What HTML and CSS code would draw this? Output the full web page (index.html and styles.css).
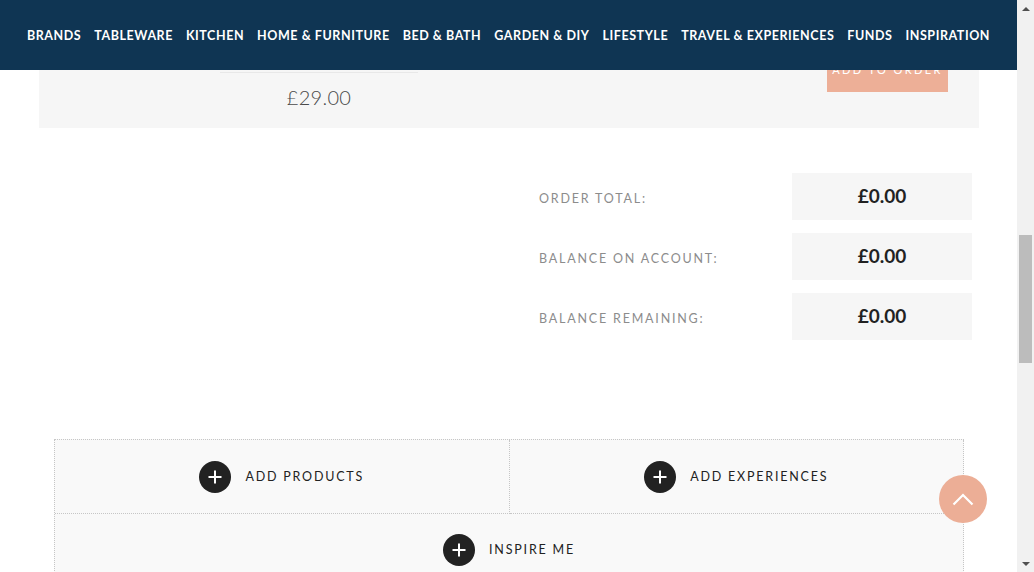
FILE: index.html
```html
<!DOCTYPE html>
<html lang="en">
<head>
<meta charset="utf-8">
<title>Order</title>
<link rel="stylesheet" href="styles.css">
</head>
<body>
<div class="window">
  <div class="viewport">
    <header class="topnav">
      <nav class="menu">
        <a class="menu-item">BRANDS</a>
        <a class="menu-item">TABLEWARE</a>
        <a class="menu-item">KITCHEN</a>
        <a class="menu-item">HOME &amp; FURNITURE</a>
        <a class="menu-item">BED &amp; BATH</a>
        <a class="menu-item">GARDEN &amp; DIY</a>
        <a class="menu-item">LIFESTYLE</a>
        <a class="menu-item">TRAVEL &amp; EXPERIENCES</a>
        <a class="menu-item">FUNDS</a>
        <a class="menu-item">INSPIRATION</a>
      </nav>
    </header>

    <main class="page">
      <section class="product">
        <div class="product-info">
          <div class="divider"></div>
          <div class="price">£29.00</div>
        </div>
        <div class="product-action">
          <button class="add-btn">ADD TO ORDER</button>
        </div>
      </section>

      <section class="totals">
        <div class="totals-list">
          <div class="total-row"><span class="total-label">ORDER TOTAL:</span><span class="total-value">£0.00</span></div>
          <div class="total-row"><span class="total-label">BALANCE ON ACCOUNT:</span><span class="total-value">£0.00</span></div>
          <div class="total-row"><span class="total-label">BALANCE REMAINING:</span><span class="total-value">£0.00</span></div>
        </div>
      </section>

      <section class="adders">
        <a class="adder">
          <span class="plus"><svg viewBox="0 0 32 32" width="32" height="32"><path d="M16 9.5v13M9.5 16h13" stroke="#fff" stroke-width="2" fill="none"/></svg></span>
          <span class="adder-text">ADD PRODUCTS</span>
        </a>
        <a class="adder">
          <span class="plus"><svg viewBox="0 0 32 32" width="32" height="32"><path d="M16 9.5v13M9.5 16h13" stroke="#fff" stroke-width="2" fill="none"/></svg></span>
          <span class="adder-text">ADD EXPERIENCES</span>
        </a>
        <a class="adder adder-wide">
          <span class="plus"><svg viewBox="0 0 32 32" width="32" height="32"><path d="M16 9.5v13M9.5 16h13" stroke="#fff" stroke-width="2" fill="none"/></svg></span>
          <span class="adder-text">INSPIRE ME</span>
        </a>
      </section>
    </main>

    <a class="to-top">
      <svg viewBox="0 0 48 48" width="48" height="48"><path d="M14.5 29.5L24 20l9.5 9.5" stroke="#fff" stroke-width="2.2" fill="none"/></svg>
    </a>
  </div>

  <div class="scrollbar">
    <div class="sb-btn"><span class="arrow-up"></span></div>
    <div class="sb-track"><div class="sb-thumb"></div></div>
    <div class="sb-btn"><span class="arrow-down"></span></div>
  </div>
</div>
</body>
</html>
```

FILE: styles.css
```css
* { box-sizing: border-box; }

html, body {
  margin: 0;
  padding: 0;
  background: #fff;
  font-family: "Lato", "Liberation Sans", sans-serif;
}

.window {
  display: flex;
  width: 1034px;
  height: 572px;
  overflow: hidden;
}

.viewport {
  position: relative;
  width: 1017px;
  height: 572px;
  overflow: hidden;
}

/* header overlays the scrolled content */
.topnav {
  position: absolute;
  top: 0;
  left: 0;
  right: 0;
  height: 70px;
  background: #0f3553;
  z-index: 5;
  display: flex;
  align-items: center;
  justify-content: center;
}

.menu {
  display: flex;
  gap: 13px;
  padding-top: 1px;
}

.menu-item {
  color: #fff;
  font-size: 12.5px;
  font-weight: 700;
  letter-spacing: 0.56px;
  white-space: nowrap;
}

/* product card (partly under the header) */
.product {
  display: flex;
  margin: 0 38px 0 39px;
  height: 128px;
  background: #f6f6f6;
}

.product-info {
  width: 560px;
  display: flex;
  flex-direction: column;
  align-items: center;
  padding-top: 72px;
}

.divider {
  width: 198px;
  height: 1px;
  background: #e8e8e8;
}

.price {
  margin-top: 12px;
  font-size: 20px;
  line-height: 24px;
  font-weight: 300;
  color: #4a4a4a;
  letter-spacing: 0.3px;
}

.product-action {
  flex: 1;
  display: flex;
  justify-content: flex-end;
  align-items: flex-start;
  padding-right: 31px;
  padding-top: 46px;
}

.add-btn {
  width: 121px;
  height: 46px;
  border: 0;
  background: #edaf97;
  color: #fff;
  font-family: "Lato", "Liberation Sans", sans-serif;
  font-size: 11px;
  letter-spacing: 2.4px;
  padding: 0;
}

/* totals */
.totals {
  display: flex;
  justify-content: flex-end;
  padding: 45px 45px 0 0;
}

.totals-list {
  width: 433px;
  display: flex;
  flex-direction: column;
  gap: 13px;
}

.total-row {
  display: flex;
  align-items: center;
  justify-content: space-between;
}

.total-label {
  font-size: 12.5px;
  letter-spacing: 1.8px;
  color: #8c8c8c;
  padding-top: 3px;
}

.total-value {
  width: 180px;
  height: 47px;
  background: #f6f6f6;
  display: flex;
  align-items: center;
  justify-content: center;
  font-size: 19px;
  font-weight: 700;
  color: #222;
  padding-bottom: 2px;
}

/* add buttons */
.adders {
  margin: 99px 53px 0 54px;
  display: grid;
  grid-template-columns: 1fr 1fr;
  background: #f9f9f9;
  border-top: 1px dotted #c6c6c6;
  border-left: 1px dotted #c6c6c6;
}

.adder {
  height: 74px;
  display: flex;
  align-items: center;
  justify-content: center;
  gap: 14px;
  border-right: 1px dotted #c6c6c6;
  border-bottom: 1px dotted #c6c6c6;
}

.adder-wide {
  grid-column: 1 / 3;
  height: 73px;
}

.plus {
  width: 32px;
  height: 32px;
  border-radius: 50%;
  background: #222;
  display: flex;
}

.adder-text {
  font-size: 12.5px;
  letter-spacing: 1.8px;
  color: #222;
  padding-bottom: 1px;
}

/* floating scroll-to-top */
.to-top {
  position: absolute;
  right: 30px;
  bottom: 49px;
  width: 48px;
  height: 48px;
  border-radius: 50%;
  background: #ecae96;
  display: flex;
  z-index: 4;
}

/* scrollbar */
.scrollbar {
  width: 17px;
  height: 572px;
  background: #f1f1f1;
  display: flex;
  flex-direction: column;
}

.sb-btn {
  height: 17px;
  display: flex;
  align-items: center;
  justify-content: center;
}

.arrow-up {
  width: 0;
  height: 0;
  border-left: 4px solid transparent;
  border-right: 4px solid transparent;
  border-bottom: 4px solid #505050;
}

.arrow-down {
  width: 0;
  height: 0;
  border-left: 4px solid transparent;
  border-right: 4px solid transparent;
  border-top: 4px solid #505050;
}

.sb-track {
  flex: 1;
  display: flex;
  justify-content: center;
}

.sb-thumb {
  width: 13px;
  height: 128px;
  margin-top: 218px;
  background: #bcbcbc;
}
```
